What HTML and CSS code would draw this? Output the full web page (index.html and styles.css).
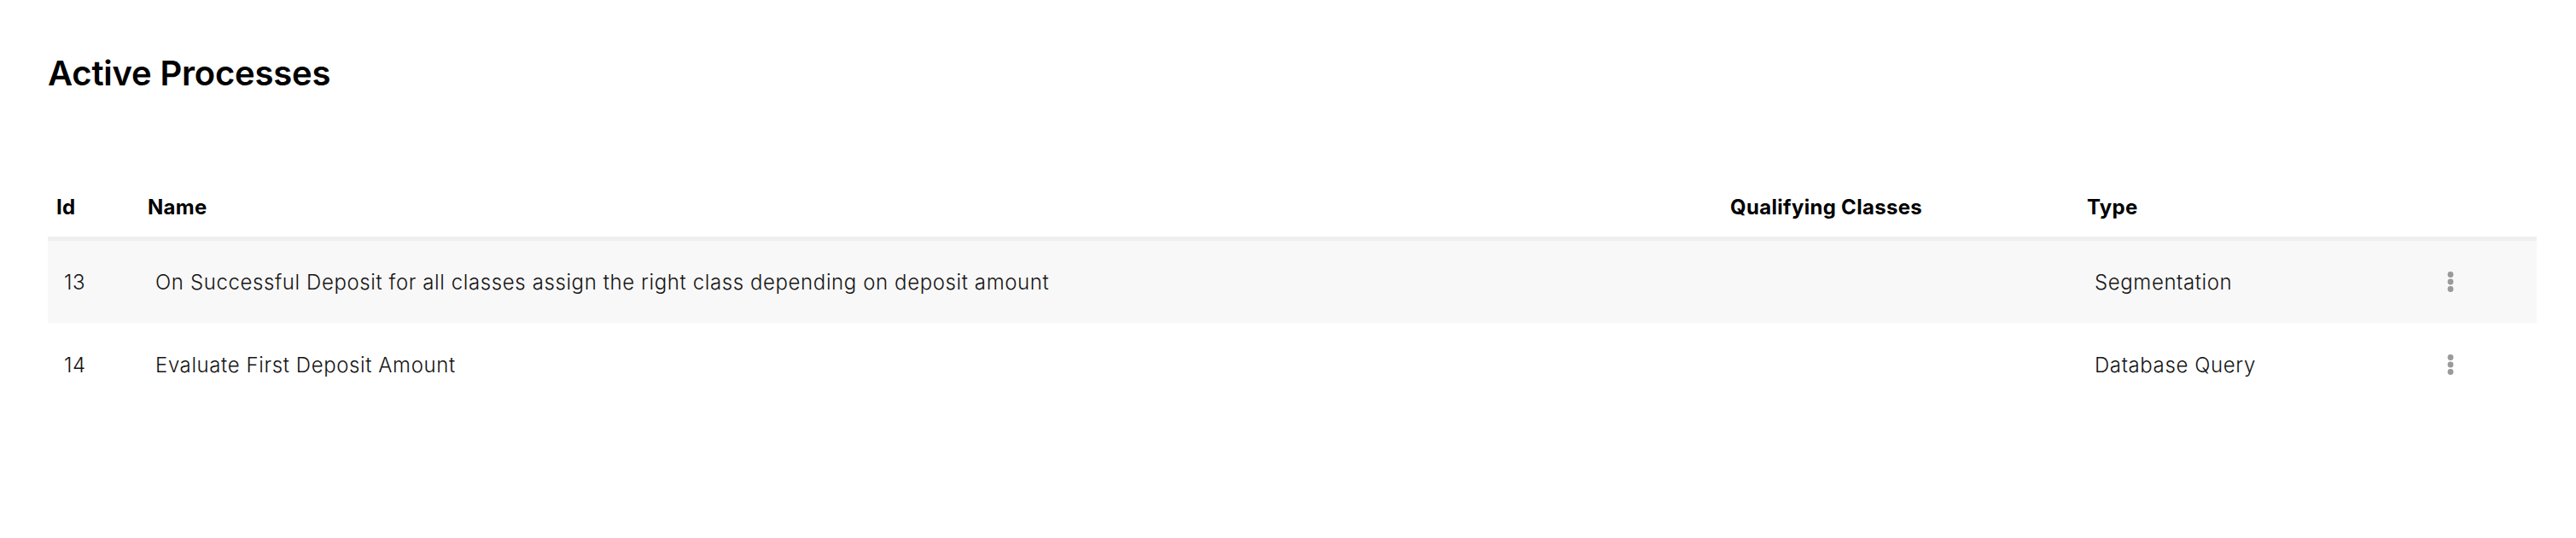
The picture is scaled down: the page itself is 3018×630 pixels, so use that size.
FILE: index.html
```html
<!DOCTYPE html>
<html lang="en">
<head>
<meta charset="utf-8">
<title>Active Processes</title>
<link rel="stylesheet" href="styles.css">
</head>
<body>
<main class="page">
  <h1 class="title">Active Processes</h1>
  <div class="table">
    <div class="row head">
      <div class="cell">Id</div>
      <div class="cell">Name</div>
      <div class="cell">Qualifying Classes</div>
      <div class="cell">Type</div>
      <div class="cell"></div>
    </div>
    <div class="row body shaded">
      <div class="cell">13</div>
      <div class="cell">On Successful Deposit for all classes assign the right class depending on deposit amount</div>
      <div class="cell"></div>
      <div class="cell">Segmentation</div>
      <div class="cell action"><svg class="kebab" width="40" height="30" viewBox="0 0 40 30"><circle cx="20" cy="6.5" r="3.4"/><circle cx="20" cy="15" r="3.4"/><circle cx="20" cy="23.5" r="3.4"/></svg></div>
    </div>
    <div class="row body tall">
      <div class="cell">14</div>
      <div class="cell">Evaluate First Deposit Amount</div>
      <div class="cell"></div>
      <div class="cell">Database Query</div>
      <div class="cell action"><svg class="kebab" width="40" height="30" viewBox="0 0 40 30"><circle cx="20" cy="6.5" r="3.4"/><circle cx="20" cy="15" r="3.4"/><circle cx="20" cy="23.5" r="3.4"/></svg></div>
    </div>
  </div>
</main>
</body>
</html>
```

FILE: styles.css
```css
html, body {
  margin: 0;
  padding: 0;
  background: #ffffff;
}
body {
  font-family: Inter, "Noto Sans", "Liberation Sans", sans-serif;
  color: #1a1a1a;
}
.page {
  padding: 62px 46px 0 56px;
}
.title {
  margin: 0;
  font-size: 40px;
  line-height: 48px;
  font-weight: 600;
  letter-spacing: -0.2px;
  color: #000;
}
.table {
  margin-top: 97px;
  width: 2916px;
}
.row {
  display: grid;
  grid-template-columns: 107px 1854px 418px 416px 121px;
  align-items: center;
}
.head {
  height: 70px;
  border-bottom: 5px solid #efefef;
  font-size: 24px;
  font-weight: 700;
  letter-spacing: 0.3px;
  color: #000;
}
.head .cell {
  padding-left: 10px;
}
.body {
  height: 96px;
  font-size: 24px;
  font-weight: 300;
  letter-spacing: 0.6px;
  color: #151515;
}
.body .cell {
  padding-left: 19px;
}
.body .cell.action {
  padding-left: 0;
  display: flex;
}
.shaded {
  background: #f8f8f8;
}
.tall {
  height: 98px;
}
.kebab {
  display: block;
  fill: #9a9a9a;
}
```
